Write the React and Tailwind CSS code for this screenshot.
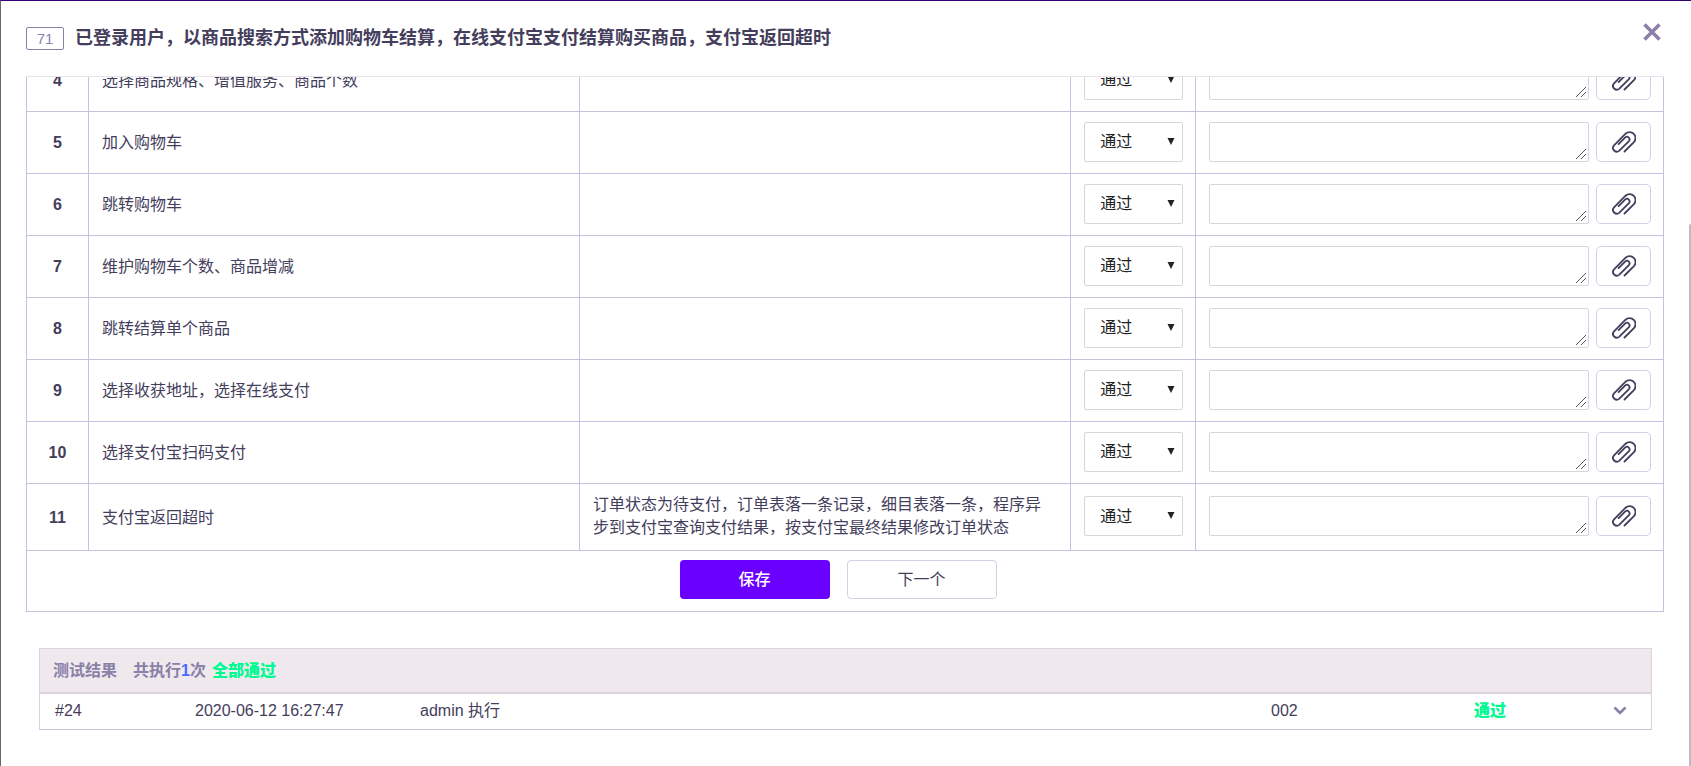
import { useState } from 'react';

const steps = [
  { id: 4, desc: '选择商品规格、增值服务、商品个数', expect: '' },
  { id: 5, desc: '加入购物车', expect: '' },
  { id: 6, desc: '跳转购物车', expect: '' },
  { id: 7, desc: '维护购物车个数、商品增减', expect: '' },
  { id: 8, desc: '跳转结算单个商品', expect: '' },
  { id: 9, desc: '选择收获地址\uff0c选择在线支付', expect: '' },
  { id: 10, desc: '选择支付宝扫码支付', expect: '' },
  {
    id: 11,
    desc: '支付宝返回超时',
    expect: '订单状态为待支付\uff0c订单表落一条记录\uff0c细目表落一条\uff0c程序异步到支付宝查询支付结果\uff0c按支付宝最终结果修改订单状态',
  },
];

const title = '已登录用户\uff0c以商品搜索方式添加购物车结算\uff0c在线支付宝支付结算购买商品\uff0c支付宝返回超时';

const results = [
  { id: 24, time: '2020-06-12 16:27:47', user: 'admin', version: '002', status: '通过' },
];

function ClipIcon() {
  return (
    <svg viewBox="0 0 24 22" className="w-6 h-[22px]" fill="none" stroke="currentColor" strokeWidth="1.8" strokeLinecap="round">
      <path d="M12.5 20.5 21.92 11.07A5.9 5.9 0 0 0 13.58 2.73L2.03 14.28A3.78 3.78 0 0 0 7.37 19.62L16.92 10.07A2.58 2.58 0 0 0 13.28 6.43L6.6 13.1" />
    </svg>
  );
}

function StepRow({ step }) {
  const [status, setStatus] = useState('pass');
  const [note, setNote] = useState('');

  return (
    <tr className="h-[62px]">
      <th scope="row" className="border border-[#c6c1de] text-center font-bold">{step.id}</th>
      <td className="border border-[#c6c1de] py-[10px] pl-[13px] pr-4">{step.desc}</td>
      <td className="border border-[#c6c1de] pt-[9px] pb-[11px] pl-[13px] pr-4">{step.expect}</td>
      <td className="border border-[#c6c1de] pl-[13px] pr-3 pb-[2px]">
        <div className="relative">
          <select
            aria-label={`步骤 ${step.id} 测试结果`}
            value={status}
            onChange={(e) => setStatus(e.target.value)}
            className="block w-full h-10 pl-[15px] appearance-none rounded-xs border border-[#d9d3de] bg-white text-[#222]"
          >
            <option value="pass">通过</option>
            <option value="fail">失败</option>
            <option value="blocked">阻塞</option>
          </select>
          <svg viewBox="0 0 8 7" className="absolute right-2 top-4 w-2 h-[7px] pointer-events-none" fill="#222">
            <path d="M0.5 0h7L4 7z" />
          </svg>
        </div>
      </td>
      <td className="border border-[#c6c1de] pl-[13px] pr-3 pb-[2px]">
        <div className="flex gap-[7px]">
          <div className="relative flex-1 min-w-0">
            <textarea
              aria-label={`步骤 ${step.id} 实际情况`}
              value={note}
              onChange={(e) => setNote(e.target.value)}
              className="block w-full h-10 px-2 py-1 rounded-xs border border-[#d9d3de] bg-white resize-none"
            />
            <svg viewBox="0 0 10 10" className="absolute right-[3px] bottom-[3px] w-[10px] h-[10px] pointer-events-none" fill="none" stroke="#444" strokeWidth="0.9">
              <path d="M0 10L10 0M5 10l5-5" />
            </svg>
          </div>
          <button
            type="button"
            aria-label={`步骤 ${step.id} 附件`}
            className="flex items-center justify-center w-[55px] h-10 rounded-[5px] border border-[#d5d0e6] bg-white text-[#443d5c]"
          >
            <ClipIcon />
          </button>
        </div>
      </td>
    </tr>
  );
}

export default function App() {
  return (
    <div className="relative min-h-screen overflow-hidden bg-white border-t border-t-[#33006f] border-l border-l-[#6c666b] font-['Liberation_Sans','Noto_Sans_CJK_SC',sans-serif] text-base leading-[23px] text-[#443d5c]">
      {/* Title */}
      <header className="flex items-start justify-between h-[75px] pl-[25px] pr-[30px]">
        <div className="flex items-center gap-[11px] pt-6">
          <span className="flex items-center justify-center w-[38px] h-[23px] rounded-xs border border-[#8880a8] text-[15px] text-[#8d82b0]">71</span>
          <h1 className="text-lg font-bold leading-[26px]">{title}</h1>
        </div>
        <button type="button" aria-label="关闭" className="mt-[22px] text-[#8a80a8]">
          <svg viewBox="0 0 18 18" className="w-[18px] h-[18px]" fill="none" stroke="currentColor" strokeWidth="3.6">
            <path d="M1.500 1.500l15 15M16.500 1.500l-15 15" />
          </svg>
        </button>
      </header>

      {/* Steps, scrolled under the title */}
      <main className="ml-[25px] mr-[27px] border-t border-[#e7e3ea] overflow-hidden">
        <table className="w-full -mt-7 table-fixed border-collapse">
          <colgroup>
            <col className="w-[62px]" />
            <col className="w-[30%]" />
            <col className="w-[30%]" />
            <col className="w-[125px]" />
            <col />
          </colgroup>
          <tbody>
            {steps.map((step) => (
              <StepRow key={step.id} step={step} />
            ))}
          </tbody>
          <tfoot>
            <tr>
              <td colSpan={5} className="border border-[#c6c1de] pt-[9px] pb-[12px] pr-[14px]">
                <div className="flex justify-center gap-[17px] h-[39px]">
                  <button type="button" className="w-[150px] rounded bg-[#6a00ff] font-medium text-white">保存</button>
                  <button type="button" className="w-[150px] rounded border border-[#d5d0e6] bg-white">下一个</button>
                </div>
              </td>
            </tr>
          </tfoot>
        </table>
      </main>

      {/* Results */}
      <section className="mt-9 ml-[38px] mr-[39px] border border-[#d8d3de] border-b-[#c6c1de]">
        <h2 className="flex items-center h-[43px] pl-[13px] bg-[#efe9ed] font-bold text-[#8a80a8]">
          <span className="mr-4">测试结果</span>
          <span className="mr-[6px]">共执行<span className="text-[#4b6bff]">1</span>次</span>
          <span className="font-black text-[#00fa92]">全部通过</span>
        </h2>
        <table className="w-full table-fixed border-t-2 border-[#dcd3dd]">
          <colgroup>
            <col className="w-[140px]" />
            <col className="w-[225px]" />
            <col />
            <col className="w-[203px]" />
            <col className="w-[120px]" />
            <col className="w-[58px]" />
          </colgroup>
          <tbody>
            {results.map((r) => (
              <tr key={r.id} className="h-9">
                <td className="pl-[15px] pb-[2px]">#{r.id}</td>
                <td className="pl-[15px] pb-[2px]">{r.time}</td>
                <td className="pl-[15px] pb-[2px]">{r.user} 执行</td>
                <td className="pl-px pb-[2px]">{r.version}</td>
                <td className="pl-px pb-[2px] font-black text-[#00fa92]">{r.status}</td>
                <td className="pb-[2px]">
                  <button type="button" aria-label="展开" className="flex items-center ml-5 text-[#8a80a8]">
                    <svg viewBox="0 0 14 9" className="w-[14px] h-[9px]" fill="none" stroke="currentColor" strokeWidth="2.6">
                      <path d="M1.500 1.500L7 7l5.500-5.500" />
                    </svg>
                  </button>
                </td>
              </tr>
            ))}
          </tbody>
        </table>
      </section>

      {/* Scrollbar thumb */}
      <div className="absolute right-0 top-[223px] bottom-0 w-[2px] rounded-tl-xs bg-[#c1b8c6]" />
    </div>
  );
}
